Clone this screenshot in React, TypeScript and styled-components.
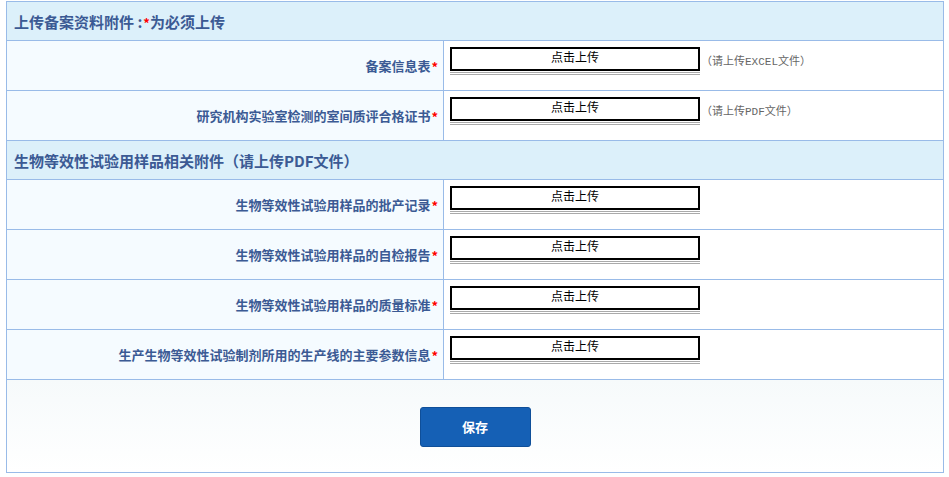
import styled, { createGlobalStyle } from "styled-components";

const GlobalStyle = createGlobalStyle`
  html, body {
    margin: 0;
    padding: 0;
    background: #fff;
  }
  body {
    font-family: "Noto Sans CJK SC", "Noto Sans", sans-serif;
  }
`;

const Page = styled.div`
  padding: 1px 0 0 6px;
`;

// outer table frame
const Table = styled.div`
  width: 936px;
  border: 1px solid #99bbe8;
`;

const SectionHead = styled.div`
  height: 38px;
  display: flex;
  align-items: center;
  padding-left: 7px;
  background: #dcf0fa;
  color: #3b5a94;
  font-size: 15px;
  font-weight: 700;
  border-top: 1px solid #99bbe8;

  &:first-child {
    border-top: none;
  }
`;

const Row = styled.div`
  display: grid;
  grid-template-columns: 437px 1fr;
  height: 49px;
  border-top: 1px solid #99bbe8;
`;

const LabelCell = styled.div`
  display: flex;
  align-items: center;
  justify-content: flex-end;
  padding-right: 5px;
  background: #f5fbff;
  border-right: 1px solid #99bbe8;
  color: #3b5a94;
  font-size: 13px;
  font-weight: 700;
`;

const Star = styled.span`
  color: #f00;
  font-weight: 700;
  font-size: 13px;
  margin-left: 1px;
  position: relative;
  top: 1px;
`;

const InputCell = styled.div`
  display: flex;
  align-items: flex-start;
  padding: 6px 0 0 6px;
  background: #fff;
`;

const UploadWrap = styled.div`
  width: 250px;
`;

const UploadButton = styled.div`
  box-sizing: border-box;
  height: 24px;
  border: 2px solid #000;
  background: #fff;
  text-align: center;
  font-size: 12px;
  line-height: 16px;
  color: #000;
  cursor: pointer;
`;

// grey double rule under the upload box
const UploadRule = styled.div`
  margin-top: 1px;
  border-top: 3px double #aaa;
`;

const Hint = styled.span`
  margin: 8px 0 0 1px;
  font-family: "Liberation Mono", "Noto Sans CJK SC", monospace;
  font-size: 11px;
  line-height: 14px;
  color: #666;
`;

const Footer = styled.div`
  height: 92px;
  display: flex;
  align-items: center;
  justify-content: center;
  border-top: 1px solid #99bbe8;
  background: linear-gradient(#f6fafb, #fff);
`;

const SaveButton = styled.button`
  width: 111px;
  height: 40px;
  margin-top: 1px;
  border: 1px solid #0f4f99;
  border-radius: 3px;
  background: #1560b5;
  color: #fff;
  font-family: "Noto Sans CJK SC", sans-serif;
  font-size: 13px;
  font-weight: 700;
  cursor: pointer;
`;

interface UploadRowProps {
  label: string;
  hint?: string;
}

function UploadRow({ label, hint }: UploadRowProps) {
  return (
    <Row>
      <LabelCell>
        {label}
        <Star>*</Star>
      </LabelCell>
      <InputCell>
        <UploadWrap>
          <UploadButton>点击上传</UploadButton>
          <UploadRule />
        </UploadWrap>
        {hint && <Hint>{hint}</Hint>}
      </InputCell>
    </Row>
  );
}

const sampleFiles = [
  "生物等效性试验用样品的批产记录",
  "生物等效性试验用样品的自检报告",
  "生物等效性试验用样品的质量标准",
  "生产生物等效性试验制剂所用的生产线的主要参数信息",
];

export default function App() {
  return (
    <Page>
      <GlobalStyle />
      <Table>
        <SectionHead>
          上传备案资料附件 :<Star>*</Star>为必须上传
        </SectionHead>
        <UploadRow label="备案信息表" hint="（请上传EXCEL文件）" />
        <UploadRow label="研究机构实验室检测的室间质评合格证书" hint="（请上传PDF文件）" />
        <SectionHead>生物等效性试验用样品相关附件（请上传PDF文件）</SectionHead>
        {sampleFiles.map((name) => (
          <UploadRow key={name} label={name} />
        ))}
        <Footer>
          <SaveButton>保存</SaveButton>
        </Footer>
      </Table>
    </Page>
  );
}
